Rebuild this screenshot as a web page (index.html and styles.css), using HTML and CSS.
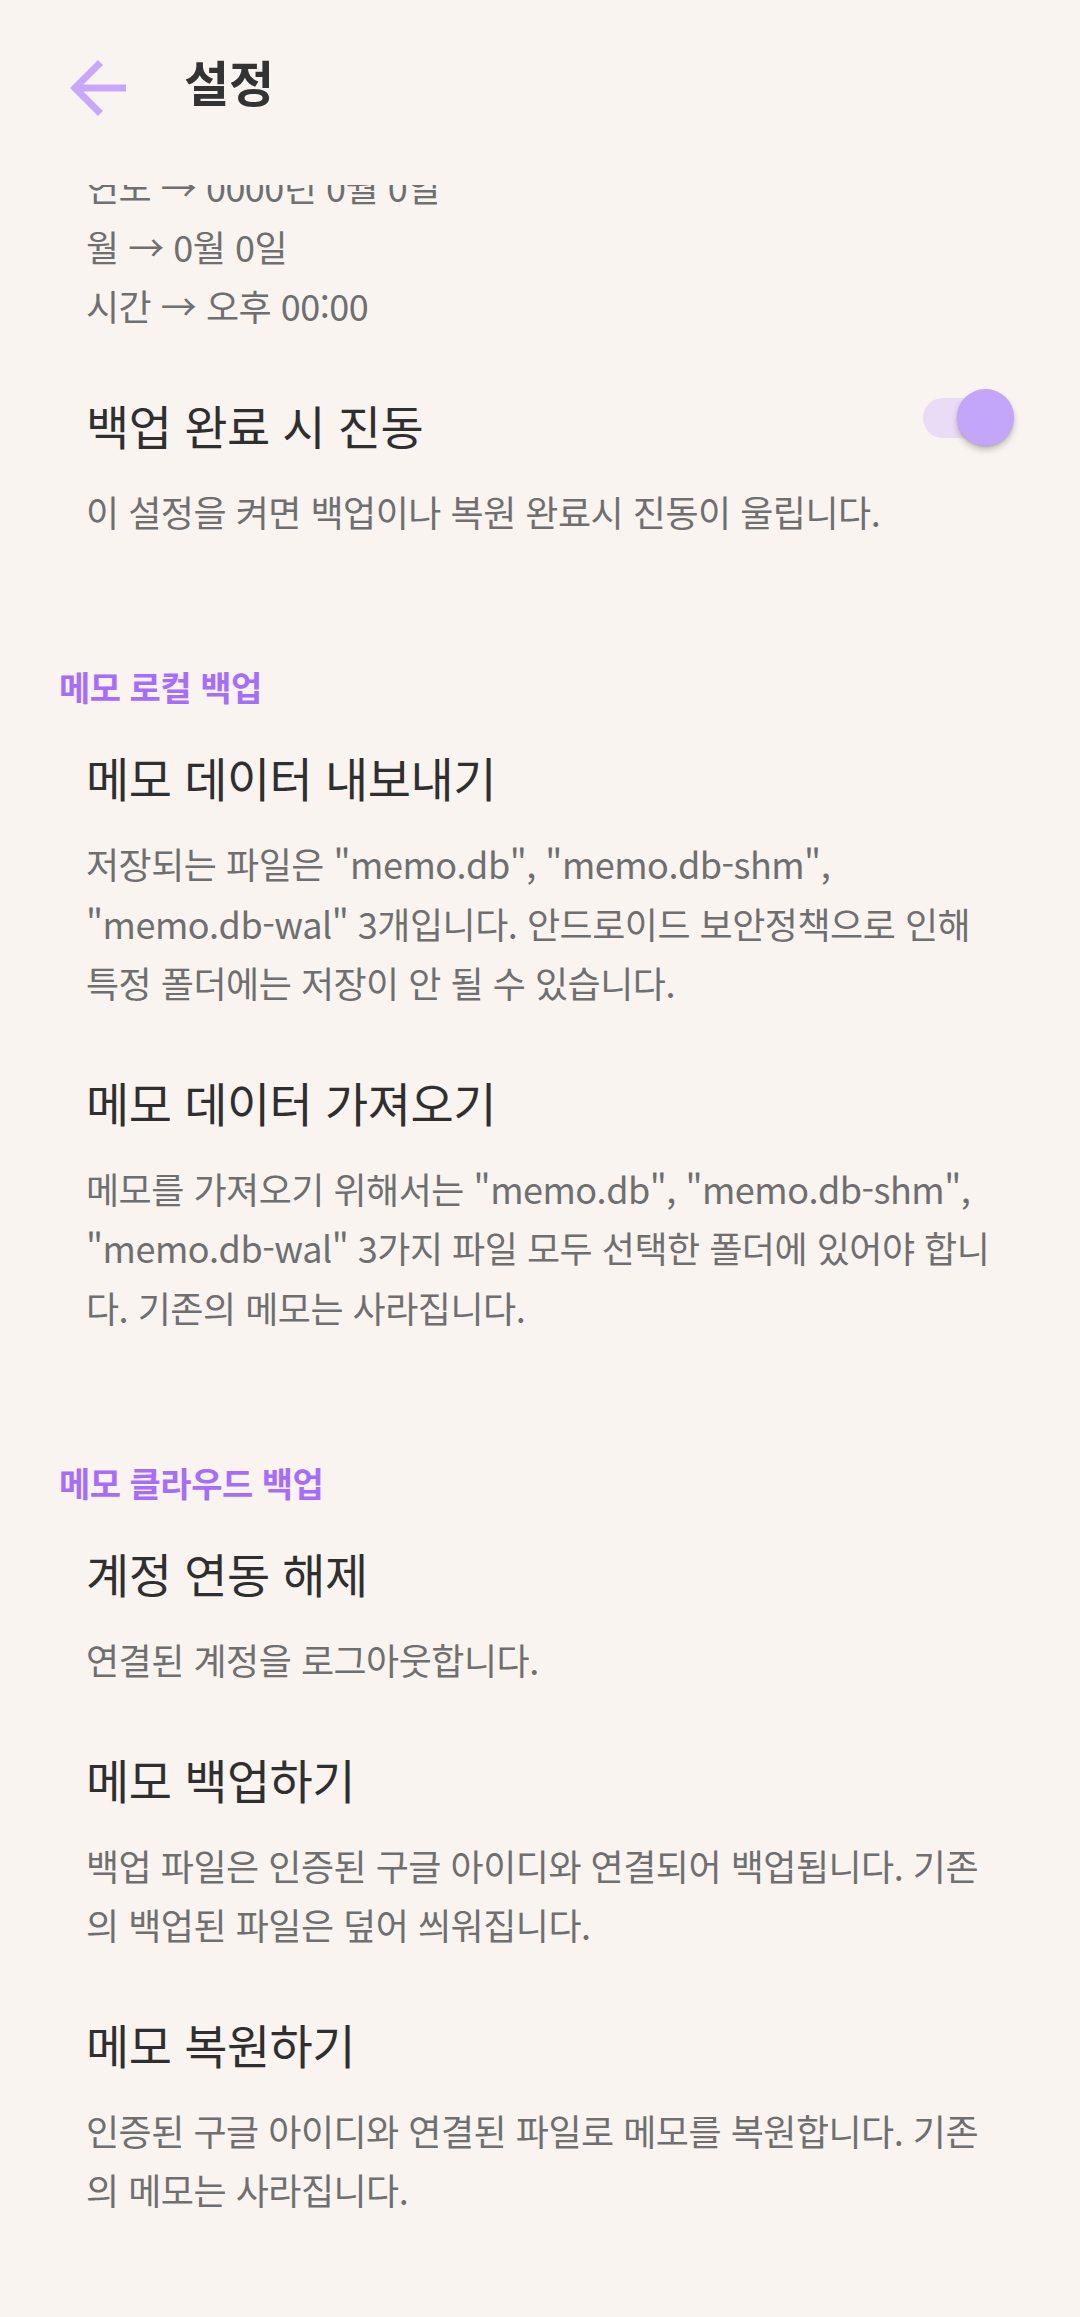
FILE: index.html
```html
<!DOCTYPE html>
<html lang="ko">
<head>
<meta charset="utf-8">
<title>설정</title>
<link rel="stylesheet" href="styles.css">
</head>
<body>
<header class="appbar">
  <svg class="back" viewBox="0 0 24 24" width="84" height="84" aria-hidden="true">
    <path d="M20 11H7.83l5.59-5.59L12 4l-8 8 8 8 1.41-1.41L7.83 13H20v-2z" fill="#c8a8fd"/>
  </svg>
  <h1 class="appbar-title">설정</h1>
</header>

<main class="list">
  <section class="pref pref-partial">
    <p class="pref-desc">연도 → 0000년 0월 0일<br>월 → 0월 0일<br>시간 → 오후 00:00</p>
  </section>

  <section class="pref">
    <div class="pref-head">
      <h2 class="pref-title">백업 완료 시 진동</h2>
      <div class="switch" role="switch" aria-checked="true">
        <span class="switch-track"></span>
        <span class="switch-thumb"></span>
      </div>
    </div>
    <p class="pref-desc">이 설정을 켜면 백업이나 복원 완료시 진동이 울립니다.</p>
  </section>

  <h3 class="category">메모 로컬 백업</h3>

  <section class="pref">
    <h2 class="pref-title">메모 데이터 내보내기</h2>
    <p class="pref-desc">저장되는 파일은 "memo.db", "memo.db-shm",<br>"memo.db-wal" 3개입니다. 안드로이드 보안정책으로 인해<br>특정 폴더에는 저장이 안 될 수 있습니다.</p>
  </section>

  <section class="pref">
    <h2 class="pref-title">메모 데이터 가져오기</h2>
    <p class="pref-desc">메모를 가져오기 위해서는 "memo.db", "memo.db-shm",<br>"memo.db-wal" 3가지 파일 모두 선택한 폴더에 있어야 합니<br>다. 기존의 메모는 사라집니다.</p>
  </section>

  <h3 class="category">메모 클라우드 백업</h3>

  <section class="pref">
    <h2 class="pref-title">계정 연동 해제</h2>
    <p class="pref-desc">연결된 계정을 로그아웃합니다.</p>
  </section>

  <section class="pref">
    <h2 class="pref-title">메모 백업하기</h2>
    <p class="pref-desc">백업 파일은 인증된 구글 아이디와 연결되어 백업됩니다. 기존<br>의 백업된 파일은 덮어 씌워집니다.</p>
  </section>

  <section class="pref">
    <h2 class="pref-title">메모 복원하기</h2>
    <p class="pref-desc">인증된 구글 아이디와 연결된 파일로 메모를 복원합니다. 기존<br>의 메모는 사라집니다.</p>
  </section>
</main>
</body>
</html>
```

FILE: styles.css
```css
html, body {
  margin: 0;
  padding: 0;
}

body {
  width: 1080px;
  height: 2317px;
  overflow: hidden;
  background: #f9f4f0;
  font-family: "Noto Sans CJK KR", "Noto Sans", sans-serif;
  color: #2f2f2f;
}

/* Top app bar, overlays the scrolled list */
.appbar {
  position: fixed;
  top: 0;
  left: 0;
  right: 0;
  height: 185px;
  z-index: 10;
  background: #f9f4f0;
  display: flex;
  align-items: flex-start;
  box-sizing: border-box;
  padding: 46px 0 0 56px;
  gap: 44px;
}

.back {
  display: block;
  flex: none;
}

.appbar-title {
  margin: 0;
  height: 84px;
  line-height: 84px;
  font-size: 49px;
  font-weight: 700;
  color: #333333;
  position: relative;
  top: -7px;
}

/* Scrolled list */
.list {
  padding-top: 157px;
}

.pref {
  padding: 29.5px 66px 29.5px 86px;
}

.pref-partial {
  padding-top: 0;
}

.pref-head {
  display: flex;
  align-items: flex-start;
  justify-content: space-between;
}

.pref-title {
  margin: 0;
  font-size: 47px;
  font-weight: 400;
  line-height: 60px;
  letter-spacing: -0.5px;
  color: #2f2f2f;
}

.pref-desc {
  margin: 27px 0 0;
  font-size: 36px;
  font-weight: 400;
  line-height: 59.5px;
  letter-spacing: -0.5px;
  color: #6f6f6f;
  white-space: nowrap;
}

.pref-partial .pref-desc {
  margin-top: 0;
}

.category {
  margin: 0;
  padding: 96.5px 0 10.5px 59px;
  font-size: 34px;
  font-weight: 700;
  line-height: 40px;
  letter-spacing: -0.5px;
  color: #a66dfc;
}

/* Switch */
.switch {
  position: relative;
  width: 91px;
  height: 60px;
  flex: none;
}

.switch-track {
  position: absolute;
  left: 0;
  top: 3.5px;
  width: 80px;
  height: 40px;
  border-radius: 20px;
  background: #eadcf6;
}

.switch-thumb {
  position: absolute;
  right: 0;
  top: -5.5px;
  width: 57px;
  height: 57px;
  border-radius: 50%;
  background: #c3a5f9;
  box-shadow: 0 4px 6px rgba(0, 0, 0, 0.22), 0 1px 2px rgba(0, 0, 0, 0.12);
}
```
